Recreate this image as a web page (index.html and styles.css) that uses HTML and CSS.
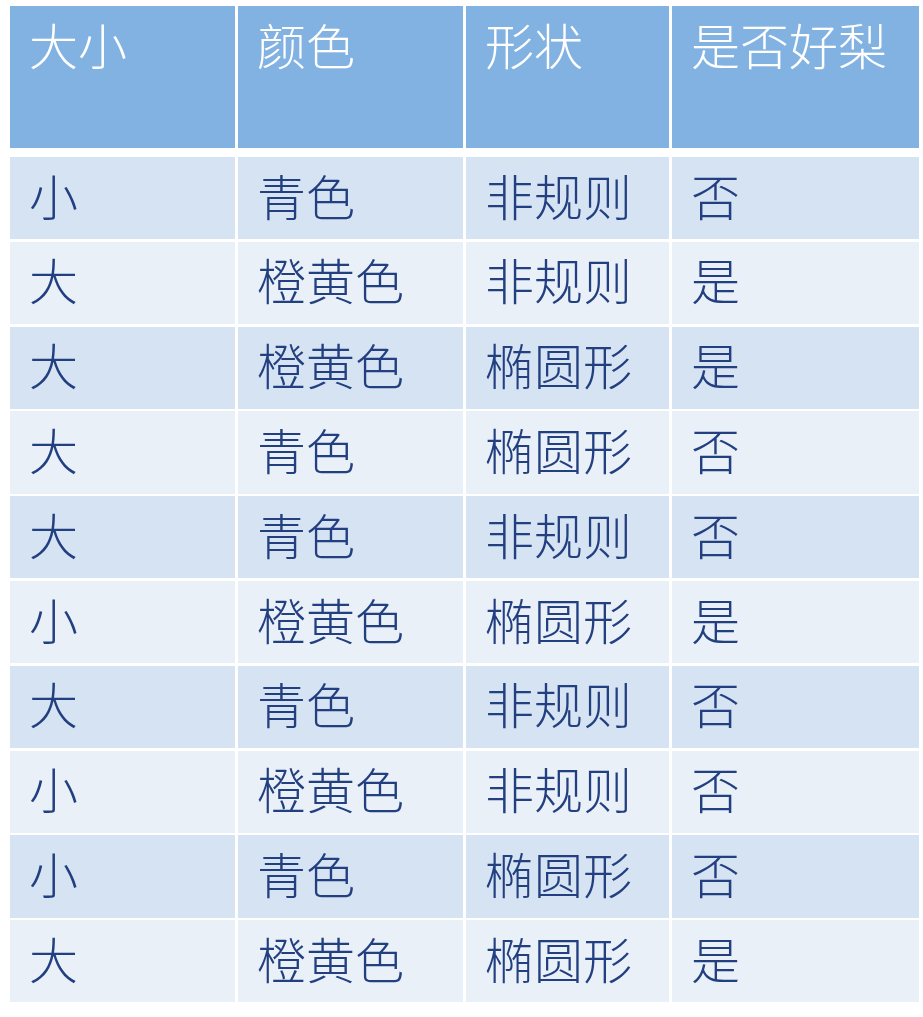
FILE: index.html
```html
<!DOCTYPE html>
<html lang="zh">
<head>
<meta charset="utf-8">
<title>梨子数据表</title>
<link rel="stylesheet" href="styles.css">
</head>
<body>
<div class="table">
  <div class="cell head">大小</div>
  <div class="cell head">颜色</div>
  <div class="cell head">形状</div>
  <div class="cell head">是否好梨</div>

  <div class="cell odd">小</div><div class="cell odd">青色</div><div class="cell odd">非规则</div><div class="cell odd">否</div>
  <div class="cell even">大</div><div class="cell even">橙黄色</div><div class="cell even">非规则</div><div class="cell even">是</div>
  <div class="cell odd">大</div><div class="cell odd">橙黄色</div><div class="cell odd">椭圆形</div><div class="cell odd">是</div>
  <div class="cell even">大</div><div class="cell even">青色</div><div class="cell even">椭圆形</div><div class="cell even">否</div>
  <div class="cell odd">大</div><div class="cell odd">青色</div><div class="cell odd">非规则</div><div class="cell odd">否</div>
  <div class="cell even">小</div><div class="cell even">橙黄色</div><div class="cell even">椭圆形</div><div class="cell even">是</div>
  <div class="cell odd">大</div><div class="cell odd">青色</div><div class="cell odd">非规则</div><div class="cell odd">否</div>
  <div class="cell even">小</div><div class="cell even">橙黄色</div><div class="cell even">非规则</div><div class="cell even">否</div>
  <div class="cell odd">小</div><div class="cell odd">青色</div><div class="cell odd">椭圆形</div><div class="cell odd">否</div>
  <div class="cell even">大</div><div class="cell even">橙黄色</div><div class="cell even">椭圆形</div><div class="cell even">是</div>
</div>
</body>
</html>
```

FILE: styles.css
```css
html, body {
  margin: 0;
  padding: 0;
  background: #ffffff;
}

body {
  padding: 6px 0 0 10px;
  font-family: "Noto Sans CJK SC", "Noto Sans CJK TC", sans-serif;
}

.table {
  display: grid;
  grid-template-columns: 225px 225px 203px 247px;
  grid-template-rows: 148.5px;
  grid-auto-rows: 82.3px;
  column-gap: 3px;
  row-gap: 2.5px;
  width: 909px;
}

.cell {
  font-size: 49px;
  font-weight: 300;
  line-height: 1;
  padding-left: 19px;
  display: flex;
  align-items: center;
  color: #223f80;
  box-sizing: border-box;
}

.head {
  background: #82b2e1;
  color: #ffffff;
  align-items: flex-start;
  align-self: start;
  padding-top: 13px;
  height: 142px;
}

.odd {
  background: #d6e3f3;
  padding-bottom: 8px;
}

.even {
  background: #e9f0f8;
  padding-bottom: 8px;
}
```
